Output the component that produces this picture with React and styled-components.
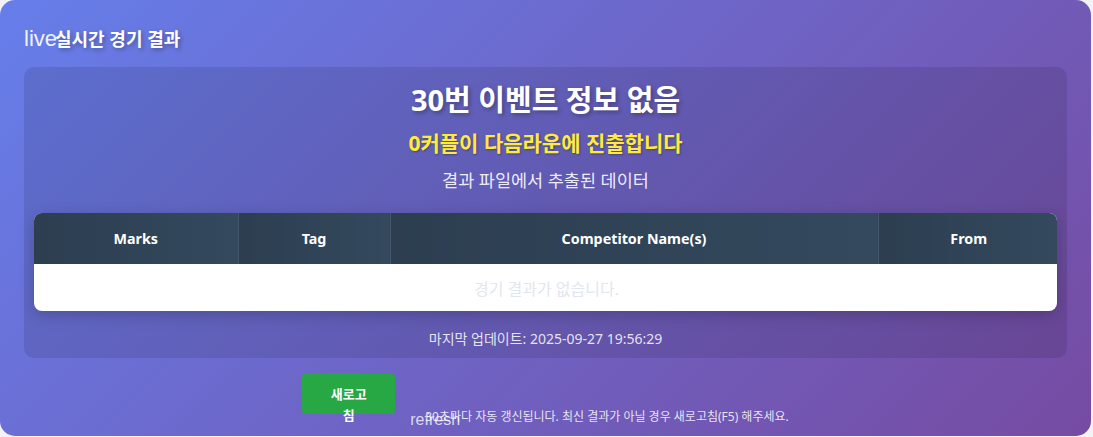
import React from "react";
import styled, { createGlobalStyle } from "styled-components";

const Global = createGlobalStyle`
  html, body { margin: 0; padding: 0; background: #f3f3f6; }
  body { font-family: "Noto Sans", "Noto Sans CJK KR", sans-serif; }
  * { box-sizing: border-box; }
`;

const Page = styled.div`
  width: 1091px;
  height: 436px;
  border-radius: 15px;
  background: linear-gradient(135deg, #667eea 0%, #764ba2 100%);
  padding: 28px 24px 0;
  overflow: hidden;
  color: #fff;
`;

const TitleRow = styled.div`
  display: flex;
  align-items: center;
  height: 22px;
  margin-bottom: 17px;
`;

const Slot = styled.span`
  position: relative;
  display: inline-block;
  width: ${(p) => p.$w}px;
  flex: none;
`;

const OverText = styled.span`
  position: absolute;
  left: 0;
  top: ${(p) => p.$top}px;
  white-space: nowrap;
  font-family: "Liberation Sans", "Noto Sans", sans-serif;
  font-size: ${(p) => p.$size}px;
  color: ${(p) => p.$color};
  line-height: 1;
`;

const Title = styled.h1`
  margin: 0;
  font-size: 18px;
  font-weight: 700;
  line-height: 22px;
  color: #fff;
  text-shadow: 2px 2px 4px rgba(0, 0, 0, 0.3);
`;

const Card = styled.section`
  background: rgba(0, 0, 0, 0.1);
  border-radius: 10px;
  padding: 15px 10px 11px;
  display: flex;
  flex-direction: column;
  align-items: center;
`;

const EventTitle = styled.h2`
  margin: 0;
  font-size: 29px;
  font-weight: 700;
  line-height: 35px;
  text-shadow: 2px 2px 4px rgba(0, 0, 0, 0.3);
`;

const Advance = styled.div`
  margin-top: 14px;
  font-size: 21px;
  font-weight: 700;
  line-height: 25px;
  color: #ffeb3b;
  text-shadow: 1px 1px 2px rgba(0, 0, 0, 0.3);
`;

const Source = styled.div`
  margin-top: 14px;
  font-size: 17.5px;
  line-height: 21px;
  color: rgba(255, 255, 255, 0.9);
`;

const TableWrap = styled.div`
  margin-top: 22px;
  width: 100%;
  border-radius: 8px;
  overflow: hidden;
  background: #fff;
  box-shadow: 0 4px 15px rgba(0, 0, 0, 0.2);
`;

const Table = styled.table`
  width: 100%;
  border-collapse: collapse;
  table-layout: fixed;
`;

const Th = styled.th`
  width: ${(p) => p.$w}px;
  height: 51px;
  padding: 0 10px;
  background: linear-gradient(90deg, #2c3e50, #34495e);
  color: #fff;
  font-size: 14.3px;
  font-weight: 700;
  text-align: center;
  border-left: 1px solid rgba(255, 255, 255, 0.1);
  &:first-child { border-left: none; }
`;

const Empty = styled.td`
  height: 47px;
  text-align: center;
  font-size: 16px;
  color: #e1e7ee;
`;

const Updated = styled.div`
  margin-top: 19px;
  font-size: 14px;
  line-height: 17px;
  color: rgba(255, 255, 255, 0.85);
`;

const Footer = styled.div`
  margin-top: 16px;
  display: flex;
  justify-content: center;
  align-items: flex-start;
  gap: 15px;
`;

const RefreshButton = styled.button`
  width: 93px;
  height: 40px;
  padding: 10px 24px;
  border: none;
  border-radius: 4px;
  background: #28a745;
  color: #fff;
  font-family: "Noto Sans", "Noto Sans CJK KR", sans-serif;
  font-size: 13px;
  font-weight: 700;
  line-height: 21px;
  text-align: center;
  overflow: visible;
  flex: none;
  display: block;
`;

const ButtonLabel = styled.span`
  display: block;
`;

const Info = styled.div`
  margin-top: 35px;
  font-size: 12px;
  line-height: 16px;
  color: rgba(255, 255, 255, 0.85);
  white-space: nowrap;
`;

const cols = [
  ["Marks", 204],
  ["Tag", 152],
  ["Competitor Name(s)", 488],
  ["From", 181],
];

export default function App() {
  return (
    <>
      <Global />
      <Page>
        <TitleRow>
          <Slot $w={31}>
            <OverText $top={-11} $size={22} $color="rgba(255,255,255,0.92)">live</OverText>
          </Slot>
          <Title>실시간 경기 결과</Title>
        </TitleRow>
        <Card>
          <EventTitle>30번 이벤트 정보 없음</EventTitle>
          <Advance>0커플이 다음라운에 진출합니다</Advance>
          <Source>결과 파일에서 추출된 데이터</Source>
          <TableWrap>
            <Table>
              <thead>
                <tr>
                  {cols.map(([c, w]) => (
                    <Th key={c} $w={w}>{c}</Th>
                  ))}
                </tr>
              </thead>
              <tbody>
                <tr>
                  <Empty colSpan={4}>경기 결과가 없습니다.</Empty>
                </tr>
              </tbody>
            </Table>
          </TableWrap>
          <Updated>마지막 업데이트: 2025-09-27 19:56:29</Updated>
        </Card>
        <Footer>
          <RefreshButton>
            <ButtonLabel>새로고침</ButtonLabel>
          </RefreshButton>
          <Slot $w={0}>
            <OverText $top={38} $size={16} $color="rgba(255,255,255,0.75)">refresh</OverText>
          </Slot>
          <Info>30초마다 자동 갱신됩니다. 최신 결과가 아닐 경우 새로고침(F5) 해주세요.</Info>
        </Footer>
      </Page>
    </>
  );
}
